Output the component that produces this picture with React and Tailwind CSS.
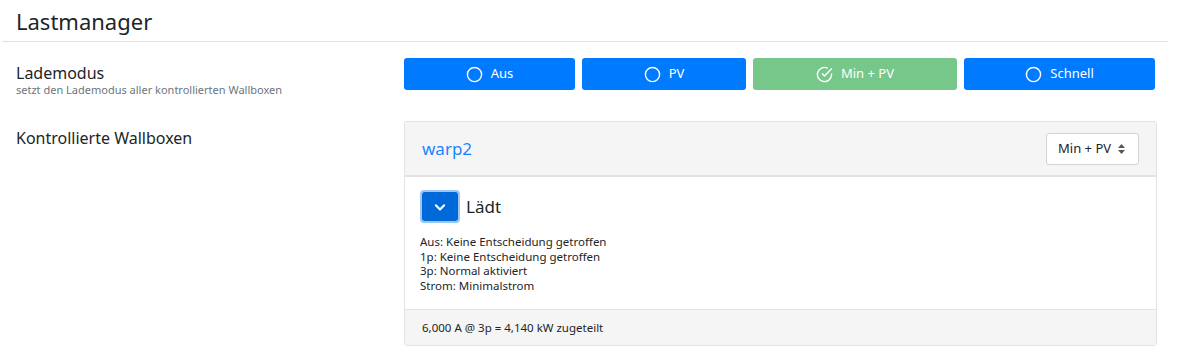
const FONT = { fontFamily: '"Noto Sans", "Open Sans", sans-serif' };

const MODES = [
  { label: 'Aus', w: 'w-[171px]' },
  { label: 'PV', w: 'w-[164px]' },
  { label: 'Min + PV', w: 'w-[204px]', active: true },
  { label: 'Schnell', w: 'w-[191px]' },
];

function Circle() {
  return (
    <svg width="17" height="17" viewBox="0 0 24 24" fill="none" stroke="currentColor" strokeWidth="2">
      <circle cx="12" cy="12" r="10" />
    </svg>
  );
}

function CheckCircle() {
  return (
    <svg width="17" height="17" viewBox="0 0 24 24" fill="none" stroke="currentColor" strokeWidth="2" strokeLinecap="round" strokeLinejoin="round">
      <path d="M22 11.08V12a10 10 0 1 1-5.93-9.14" />
      <polyline points="22 4 12 14.01 9 11.01" />
    </svg>
  );
}

export default function App() {
  return (
    <div className="bg-white w-[1200px] h-[352px] overflow-hidden text-[#212529]" style={FONT}>
      <div className="ml-[2px] w-[1166px] border-b border-[#dee2e6] pl-[14px] pt-[7px] pb-[5px]">
        <h1 className="text-[22px] leading-[29px]">Lastmanager</h1>
      </div>

      <div className="flex pt-[16px]">
        <div className="w-[404px] pl-[16px]">
          <div className="text-[16px] leading-[20px] pt-[5px]">Lademodus</div>
          <div className="text-[11px] leading-[14px] text-[#6c757d]">setzt den Lademodus aller kontrollierten Wallboxen</div>
        </div>
        <div className="flex gap-[7px]">
          {MODES.map(m => (
            <button key={m.label}
              className={`${m.w} h-[32px] rounded-[3px] text-white text-[13px] flex items-center justify-center gap-[8px] ${m.active ? 'bg-[#77c68a]' : 'bg-[#007bff]'}`}>
              {m.active ? <CheckCircle /> : <Circle />}
              {m.label}
            </button>
          ))}
        </div>
      </div>

      <div className="flex pt-[24px]">
        <div className="w-[404px] pl-[16px] pt-[7px] text-[16px] leading-[20px]">Kontrollierte Wallboxen</div>
        <div className="w-[753px] border border-[#e3e3e3] rounded-[3px] overflow-hidden">
          <div className="bg-[#f5f5f5] border-b-2 border-[#e3e3e3] h-[55px] flex items-center justify-between pl-[17px] pr-[17px]">
            <span className="text-[#1a86ff] text-[17px]">warp2</span>
            <div className="w-[93px] h-[32px] bg-white border border-[#ced4da] rounded-[3px] flex items-center pl-[11px] gap-[7px] text-[13px]">
              Min + PV
              <svg width="7" height="10" viewBox="0 0 7 10" fill="#555">
                <path d="M3.5 0L7 4H0z" />
                <path d="M3.5 10L0 6H7z" />
              </svg>
            </div>
          </div>
          <div className="px-[15px] pt-[13px] pb-[15px]">
            <div className="flex items-center gap-[6px]">
              <div className="w-[40px] h-[33px] rounded-[4px] bg-[#9cc6f5] p-[2px]">
                <div className="w-full h-full rounded-[3px] bg-[#0069d9] flex items-center justify-center text-white">
                  <svg width="20" height="20" viewBox="0 0 24 24" fill="none" stroke="currentColor" strokeWidth="2.5" strokeLinecap="round" strokeLinejoin="round">
                    <polyline points="7 10 12 15 17 10" />
                  </svg>
                </div>
              </div>
              <span className="text-[17px]">Lädt</span>
            </div>
            <div className="mt-[12px] text-[11.5px] leading-[14.7px]">
              <div>Aus: Keine Entscheidung getroffen</div>
              <div>1p: Keine Entscheidung getroffen</div>
              <div>3p: Normal aktiviert</div>
              <div>Strom: Minimalstrom</div>
            </div>
          </div>
          <div className="bg-[#f5f5f5] border-t border-[#e3e3e3] h-[36px] flex items-center pl-[17px] text-[11.5px]">
            6,000 A @ 3p = 4,140 kW zugeteilt
          </div>
        </div>
      </div>
    </div>
  );
}
